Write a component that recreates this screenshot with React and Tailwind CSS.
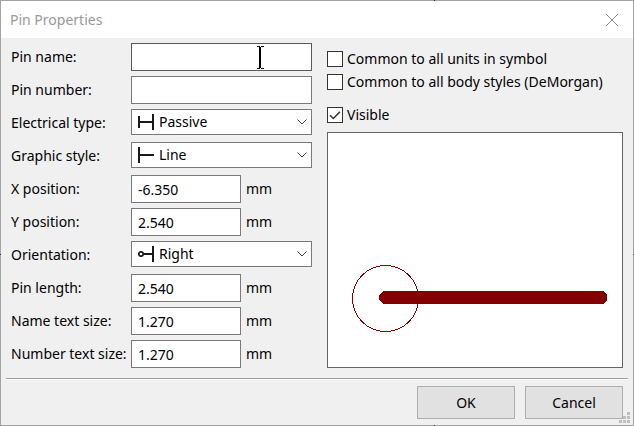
import React, { useId } from "react";

const ICONS = {
  passive: (
    <>
      <rect x="0" y="2" width="2" height="12" />
      <rect x="2" y="7" width="12" height="2" />
      <rect x="14" y="0" width="2" height="16" />
    </>
  ),
  line: (
    <>
      <rect x="0" y="0" width="2" height="16" />
      <rect x="2" y="7" width="14" height="2" />
    </>
  ),
  right: (
    <>
      <circle cx="3" cy="8" r="2.2" fill="none" stroke="#1a1a1a" strokeWidth="1.7" />
      <rect x="5" y="7" width="9" height="2" />
      <rect x="14" y="0" width="2" height="16" />
    </>
  ),
};

function Row({ id, label, children }) {
  return (
    <div className="flex h-[28px] items-center">
      <label htmlFor={id} className="w-[120px] shrink-0 whitespace-nowrap">
        {label}
      </label>
      <div className="flex min-w-0 flex-1 items-start self-stretch">{children}</div>
    </div>
  );
}

function TextRow({ label, pointer }) {
  const id = useId();
  return (
    <Row id={id} label={label}>
      <div className="relative flex h-full w-full">
        <input
          id={id}
          type="text"
          className={`h-full w-full border bg-white px-1.5 outline-none ${pointer ? "border-[#5a5a5a]" : "border-[#7a7a7a]"}`}
        />
        {pointer && (
          <svg
            className="absolute right-[47px] top-[3px] h-[24px] w-[9px]"
            viewBox="0 0 9 24"
            shapeRendering="crispEdges"
            aria-hidden="true"
          >
            <rect x="0" y="22" width="9" height="2" fill="#fff" />
            <path d="M1 0h3v1h1V0h3v1H5v21h3v1H5v-1H4v1H1v-1h2V1H1z" fill="#000" />
          </svg>
        )}
      </div>
    </Row>
  );
}

function UnitRow({ label, value }) {
  const id = useId();
  return (
    <Row id={id} label={label}>
      <input
        id={id}
        type="text"
        defaultValue={value}
        className="h-full w-[110px] border border-[#7a7a7a] bg-white px-1.5 outline-none"
      />
      <span className="ml-[5px] self-center">mm</span>
    </Row>
  );
}

function SelectRow({ label, value, icon }) {
  const id = useId();
  return (
    <Row id={id} label={label}>
      <div className="relative h-[26px] w-full">
        <select
          id={id}
          defaultValue={value}
          className="h-full w-full appearance-none border border-[#7a7a7a] bg-white pl-[27px] pr-6 outline-none"
        >
          <option>{value}</option>
        </select>
        <svg
          className="pointer-events-none absolute left-[7px] top-[5px] size-4"
          viewBox="0 0 16 16"
          fill="#1a1a1a"
          aria-hidden="true"
        >
          {ICONS[icon]}
        </svg>
        <svg
          className="pointer-events-none absolute right-[5px] top-[10px] h-[6px] w-[10px]"
          viewBox="0 0 10 6"
          fill="none"
          stroke="#444"
          aria-hidden="true"
        >
          <path d="M0.5 0.5 5 5l4.5-4.5" />
        </svg>
      </div>
    </Row>
  );
}

function CheckBox({ label, checked }) {
  return (
    <label className="flex h-[23px] items-center gap-1 whitespace-nowrap">
      <span className="relative flex size-4 shrink-0">
        <input
          type="checkbox"
          defaultChecked={checked}
          className="peer size-4 appearance-none border border-[#333] bg-white"
        />
        <svg
          className="pointer-events-none absolute inset-0 hidden size-4 peer-checked:block"
          viewBox="0 0 16 16"
          fill="none"
          stroke="#333"
          strokeWidth="1.5"
          aria-hidden="true"
        >
          <path d="M3 8.2 6.300 11.500 13 4.800" />
        </svg>
      </span>
      {label}
    </label>
  );
}

function Preview() {
  return (
    <div className="mt-1.5 flex-1 border border-[#646464] bg-white">
      <svg
        className="block h-[234px] w-full"
        viewBox="0 0 294 234"
        shapeRendering="crispEdges"
        role="img"
        aria-label="Pin preview"
      >
        <circle cx="57.5" cy="165.5" r="33" fill="none" stroke="#840000" />
        <path d="M55 158h220l4 4v5l-4 4H55l-4-4v-5z" fill="#840000" />
      </svg>
    </div>
  );
}

function SizeGrip() {
  return (
    <svg
      className="absolute bottom-[2px] right-[3px] size-[11px]"
      viewBox="0 0 11 11"
      fill="#bfbfbf"
      aria-hidden="true"
    >
      <path d="M8 0h3v3H8zM4 4h3v3H4zM8 4h3v3H8zM0 8h3v3H0zM4 8h3v3H4zM8 8h3v3H8z" />
    </svg>
  );
}

// Canvas axes showing through the translucent window frame.
function FrameTicks() {
  return (
    <div aria-hidden="true">
      <span className="absolute -top-px right-[198px] size-px bg-[#2c2c6c]" />
      <span className="absolute -bottom-px right-[198px] size-px bg-[#2c2c6c]" />
      <span className="absolute -left-px top-[253px] size-px bg-[#2c2c6c]" />
      <span className="absolute -right-px top-[253px] size-px bg-[#2c2c6c]" />
    </div>
  );
}

const BUTTON = "h-[33px] w-[98px] border border-[#adadad] bg-[#e1e1e1]";

export default function App() {
  return (
    <div className="relative border border-[#a3a3a3] bg-[#f0f0f0] font-['Noto_Sans','Open_Sans',sans-serif] text-[14px] leading-5 text-black">
      <header className="flex h-[37px] items-center justify-between bg-white pl-[9px] pr-[15px] text-[#999]">
        <h1>Pin Properties</h1>
        <button type="button" aria-label="Close">
          <svg className="size-[12px]" viewBox="0 0 12 12" fill="none" stroke="#888" aria-hidden="true">
            <path d="M0 0 12 12M12 0 0 12" />
          </svg>
        </button>
      </header>

      <form onSubmit={(e) => e.preventDefault()}>
        <div className="flex gap-[15px] pl-[10px] pr-[10px] pt-[5px]">
          <div className="flex w-[301px] shrink-0 flex-col gap-[5px]">
            <TextRow label="Pin name:" pointer />
            <TextRow label="Pin number:" />
            <SelectRow label="Electrical type:" value="Passive" icon="passive" />
            <SelectRow label="Graphic style:" value="Line" icon="line" />
            <UnitRow label="X position:" value="-6.350" />
            <UnitRow label="Y position:" value="2.540" />
            <SelectRow label="Orientation:" value="Right" icon="right" />
            <UnitRow label="Pin length:" value="2.540" />
            <UnitRow label="Name text size:" value="1.270" />
            <UnitRow label="Number text size:" value="1.270" />
          </div>
          <div className="flex min-w-0 flex-1 flex-col pt-1">
            <CheckBox label="Common to all units in symbol" />
            <CheckBox label="Common to all body styles (DeMorgan)" />
            <div className="mt-[10px]">
              <CheckBox label="Visible" checked />
            </div>
            <Preview />
          </div>
        </div>

        <hr className="mx-[5px] mt-[10px] h-[2px] border-b border-t border-b-white border-t-[#a0a0a0]" />

        <div className="flex justify-end gap-[10px] pb-1.5 pl-[10px] pr-[10px] pt-1.5">
          <button type="submit" className={BUTTON}>
            OK
          </button>
          <button type="button" className={BUTTON}>
            Cancel
          </button>
        </div>
      </form>

      <SizeGrip />
      <FrameTicks />
    </div>
  );
}
